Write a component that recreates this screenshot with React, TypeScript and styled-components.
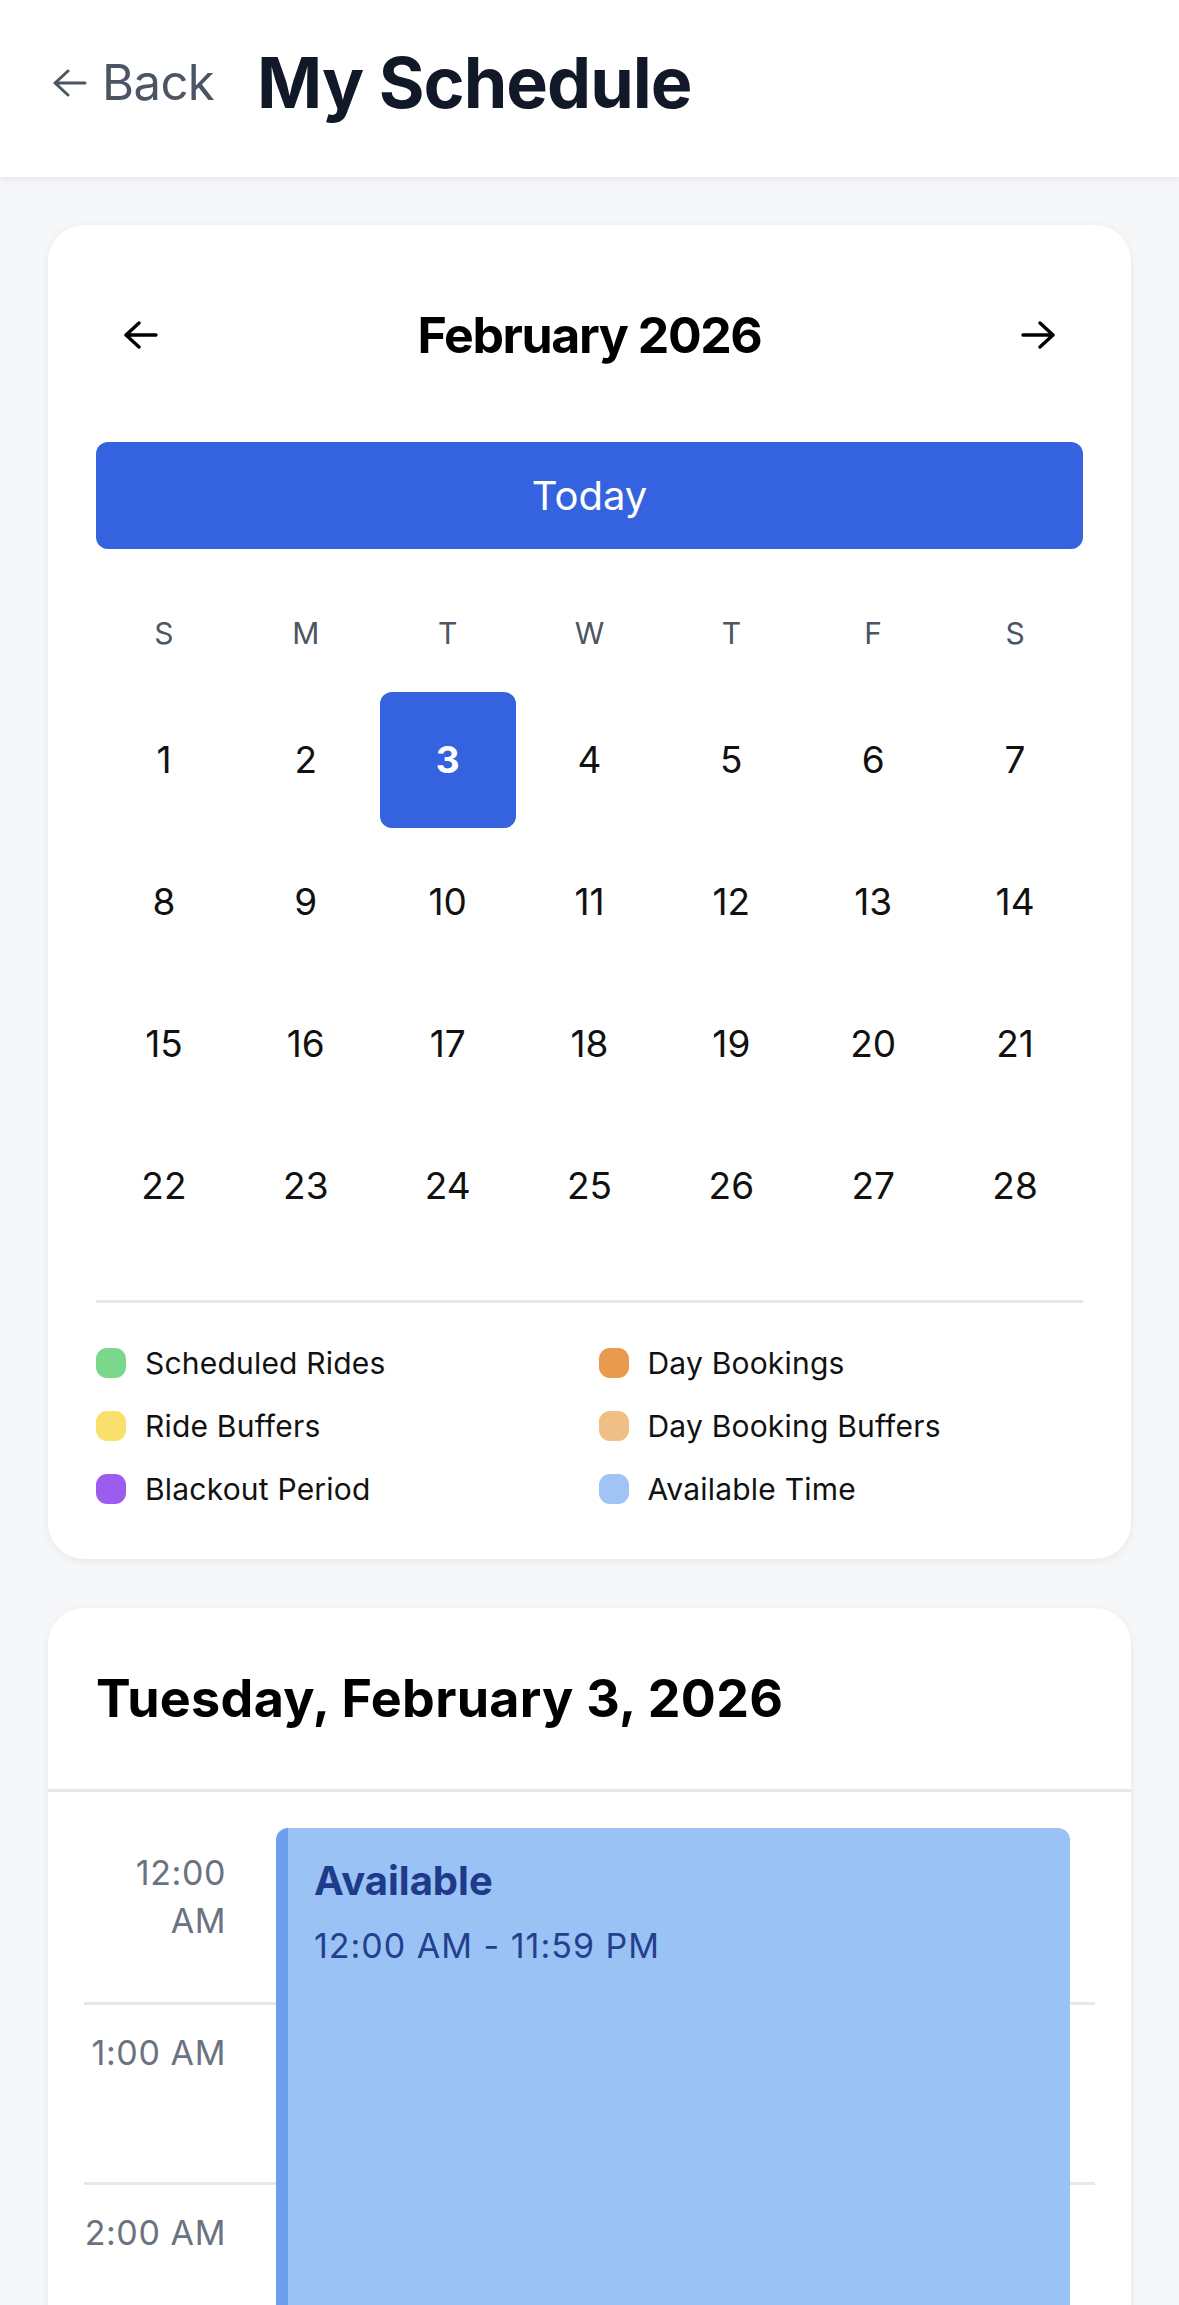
import React from 'react';
import styled, { createGlobalStyle } from 'styled-components';

const GlobalStyle = createGlobalStyle`
  html, body {
    margin: 0;
    padding: 0;
    background: #f6f7f9;
    font-family: Inter, 'Noto Sans', sans-serif;
    color: #111827;
  }
  * { box-sizing: border-box; }
`;

const TopBar = styled.header`
  height: 177px;
  background: #fff;
  display: flex;
  align-items: center;
  gap: 43px;
  padding: 0 48px 12px;
  box-shadow: 0 2px 8px rgba(15, 23, 42, 0.08);
  position: relative;
  z-index: 1;
`;

const BackLink = styled.button`
  display: flex;
  align-items: center;
  gap: 15px;
  border: 0;
  background: none;
  padding: 0 0 0 5px;
  font-family: inherit;
  font-size: 49px;
  letter-spacing: -0.6px;
  color: #4b5563;
  cursor: pointer;
`;

const PageTitle = styled.h1`
  margin: 0;
  font-size: 70px;
  font-weight: 700;
  color: #111827;
  letter-spacing: -1px;
`;

const Main = styled.main`
  padding: 48px;
  display: flex;
  flex-direction: column;
  gap: 49px;
`;

const Card = styled.section<{ $flush?: boolean }>`
  background: #fff;
  border-radius: 36px;
  box-shadow: 0 2px 9px rgba(15, 23, 42, 0.07);
  padding: ${(p) => (p.$flush ? '0' : '48px')};
  overflow: hidden;
`;

const MonthNav = styled.div`
  height: 124px;
  display: flex;
  align-items: center;
  justify-content: space-between;
`;

const NavButton = styled.button`
  border: 0;
  background: none;
  padding: 0 28px;
  display: flex;
  align-items: center;
  cursor: pointer;
`;

const MonthLabel = styled.h2`
  margin: 0;
  font-size: 50px;
  font-weight: 700;
  letter-spacing: -1.4px;
  color: #000;
`;

const TodayButton = styled.button`
  margin-top: 45px;
  width: 100%;
  height: 107px;
  border: 0;
  border-radius: 12px;
  background: #3563e0;
  color: #fff;
  font-family: inherit;
  font-size: 40px;
  cursor: pointer;
`;

const WeekRow = styled.div`
  margin-top: 60px;
  display: grid;
  grid-template-columns: repeat(7, 1fr);
  column-gap: 6px;
`;

const WeekDay = styled.div`
  text-align: center;
  font-size: 30px;
  line-height: 48px;
  color: #4b5563;
`;

const DayGrid = styled.div`
  margin-top: 35px;
  display: grid;
  grid-template-columns: repeat(7, 1fr);
  gap: 6px;
`;

const DayCell = styled.button<{ $selected?: boolean }>`
  aspect-ratio: 1;
  border: 0;
  border-radius: 12px;
  display: flex;
  align-items: center;
  justify-content: center;
  font-family: inherit;
  font-size: 37px;
  font-weight: ${(p) => (p.$selected ? 700 : 400)};
  background: ${(p) => (p.$selected ? '#3563e0' : 'transparent')};
  color: ${(p) => (p.$selected ? '#fff' : '#111')};
  cursor: pointer;
`;

const Legend = styled.div`
  margin-top: 47px;
  border-top: 3px solid #e5e7eb;
  padding-top: 37px;
  display: grid;
  grid-template-columns: 1fr 1fr;
  grid-auto-rows: 45px;
  column-gap: 18px;
  row-gap: 18px;
`;

const LegendItem = styled.div`
  display: flex;
  align-items: center;
  gap: 19px;
  font-size: 30px;
  letter-spacing: 0.2px;
  color: #111;
`;

const Swatch = styled.span<{ $color: string }>`
  width: 30px;
  height: 30px;
  border-radius: 11px;
  background: ${(p) => p.$color};
  flex-shrink: 0;
`;

const DayHeader = styled.div`
  padding: 48px;
  border-bottom: 3px solid #e5e7eb;
`;

const DayTitle = styled.h2`
  margin: 0;
  font-size: 52px;
  line-height: 85px;
  font-weight: 700;
  letter-spacing: 0.3px;
  color: #000;
`;

const Timeline = styled.div`
  position: relative;
  margin: 33px 36px 0;
`;

const HourRow = styled.div`
  height: 180px;
  border-bottom: 3px solid #e5e7eb;
  display: flex;
`;

const HourLabel = styled.div`
  width: 142px;
  padding-top: 24px;
  text-align: right;
  font-size: 34px;
  line-height: 48px;
  letter-spacing: 0.6px;
  color: #6b7280;
`;

const EventBlock = styled.div<{ $bg: string; $accent: string }>`
  position: absolute;
  top: 3px;
  left: 192px;
  right: 25px;
  background: ${(p) => p.$bg};
  border-left: 12px solid ${(p) => p.$accent};
  border-radius: 12px;
  padding: 25px 26px;
`;

const EventTitle = styled.div`
  font-size: 40px;
  line-height: 56px;
  font-weight: 700;
  color: #1e3a8a;
`;

const EventTime = styled.div`
  margin-top: 13px;
  font-size: 34px;
  line-height: 48px;
  letter-spacing: 1px;
  color: #23408e;
`;

const Arrow = ({ right, color, width = 34, height = 28, stroke = 3.4 }: {
  right?: boolean;
  color: string;
  width?: number;
  height?: number;
  stroke?: number;
}) => (
  <svg
    width={width}
    height={height}
    viewBox={`0 0 ${width} ${height}`}
    style={right ? { transform: 'scaleX(-1)' } : undefined}
  >
    <path
      d={`M2 ${height / 2}H${width - 2}M15 2L2 ${height / 2}L15 ${height - 2}`}
      fill="none"
      stroke={color}
      strokeWidth={stroke}
      strokeLinecap="round"
      strokeLinejoin="round"
    />
  </svg>
);

const weekDays = ['S', 'M', 'T', 'W', 'T', 'F', 'S'];
const days = Array.from({ length: 28 }, (_, i) => i + 1);

const legend = [
  { label: 'Scheduled Rides', color: '#7ad88a' },
  { label: 'Day Bookings', color: '#ea9a4c' },
  { label: 'Ride Buffers', color: '#f8e06a' },
  { label: 'Day Booking Buffers', color: '#efbf86' },
  { label: 'Blackout Period', color: '#9d5cf0' },
  { label: 'Available Time', color: '#9fc4f5' },
];

const hourLabel = (h: number) => {
  const suffix = h < 12 ? 'AM' : 'PM';
  const hr = h % 12 === 0 ? 12 : h % 12;
  return `${hr}:00 ${suffix}`;
};

export default function App() {
  return (
    <>
      <GlobalStyle />
      <TopBar>
        <BackLink>
          <Arrow color="#4b5563" width={34} height={28} stroke={3} />
          Back
        </BackLink>
        <PageTitle>My Schedule</PageTitle>
      </TopBar>

      <Main>
        <Card>
          <MonthNav>
            <NavButton aria-label="Previous month">
              <Arrow color="#000" />
            </NavButton>
            <MonthLabel>February 2026</MonthLabel>
            <NavButton aria-label="Next month">
              <Arrow right color="#000" />
            </NavButton>
          </MonthNav>

          <TodayButton>Today</TodayButton>

          <WeekRow>
            {weekDays.map((d, i) => (
              <WeekDay key={i}>{d}</WeekDay>
            ))}
          </WeekRow>

          <DayGrid>
            {days.map((d) => (
              <DayCell key={d} $selected={d === 3}>
                {d}
              </DayCell>
            ))}
          </DayGrid>

          <Legend>
            {legend.map((item) => (
              <LegendItem key={item.label}>
                <Swatch $color={item.color} />
                {item.label}
              </LegendItem>
            ))}
          </Legend>
        </Card>

        <Card $flush>
          <DayHeader>
            <DayTitle>Tuesday, February 3, 2026</DayTitle>
          </DayHeader>
          <Timeline>
            {Array.from({ length: 24 }, (_, h) => (
              <HourRow key={h}>
                <HourLabel>{hourLabel(h)}</HourLabel>
              </HourRow>
            ))}
            <EventBlock $bg="#9bc2f5" $accent="#6d9ef0" style={{ height: 24 * 180 - 40 }}>
              <EventTitle>Available</EventTitle>
              <EventTime>12:00 AM - 11:59 PM</EventTime>
            </EventBlock>
          </Timeline>
        </Card>
      </Main>
    </>
  );
}
